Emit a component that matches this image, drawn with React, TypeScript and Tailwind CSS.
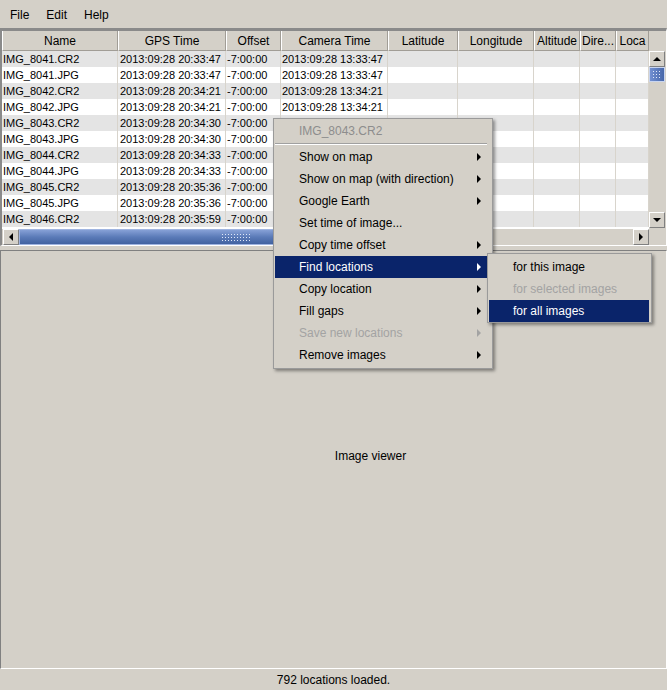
import React from 'react';

// camera time is covered by the context menu from the fifth row on
const rows = [
  ['IMG_8041.CR2', '20:33:47', '13:33:47'],
  ['IMG_8041.JPG', '20:33:47', '13:33:47'],
  ['IMG_8042.CR2', '20:34:21', '13:34:21'],
  ['IMG_8042.JPG', '20:34:21', '13:34:21'],
  ['IMG_8043.CR2', '20:34:30', ''],
  ['IMG_8043.JPG', '20:34:30', ''],
  ['IMG_8044.CR2', '20:34:33', ''],
  ['IMG_8044.JPG', '20:34:33', ''],
  ['IMG_8045.CR2', '20:35:36', ''],
  ['IMG_8045.JPG', '20:35:36', ''],
  ['IMG_8046.CR2', '20:35:59', ''],
];

const headers = ['Name', 'GPS Time', 'Offset', 'Camera Time', 'Latitude', 'Longitude', 'Altitude', 'Dire...', 'Loca'];

const cols = 'grid grid-cols-[116px_108px_55px_107px_70px_76px_46px_36px_33px]';

const menuItems = [
  { label: 'Show on map', sub: true },
  { label: 'Show on map (with direction)', sub: true },
  { label: 'Google Earth', sub: true },
  { label: 'Set time of image...', sub: false },
  { label: 'Copy time offset', sub: true },
  { label: 'Find locations', sub: true, active: true },
  { label: 'Copy location', sub: true },
  { label: 'Fill gaps', sub: true },
  { label: 'Save new locations', sub: true, disabled: true },
  { label: 'Remove images', sub: true },
];

function Btn({ children }: { children: React.ReactNode }) {
  return (
    <div className="w-[16px] h-[16px] shrink-0 bg-[#d4d0c8] border-t border-l border-white border-r border-b border-r-[#808080] border-b-[#808080] flex items-center justify-center">
      {children}
    </div>
  );
}

const grip = 'bg-[radial-gradient(circle,#dfe7f8_0.7px,transparent_1px)] bg-[length:3px_3px]';

export default function App() {
  return (
    <div className="w-[667px] h-[690px] bg-[#d4d0c8] flex flex-col relative overflow-hidden text-black font-['Liberation_Sans',Arial,sans-serif]">
      {/* Menu bar */}
      <div className="h-[28px] shrink-0 flex items-center pl-[10px] pt-[2px] gap-[17px] text-[12px]">
        <span>File</span>
        <span>Edit</span>
        <span>Help</span>
      </div>

      {/* Table */}
      <div className="h-[218px] shrink-0 border-t-[3px] border-l-2 border-[#8a8a8a] border-r border-b border-r-white border-b-white flex flex-col">
        <div className="h-[198px] flex">
          <div className="w-[647px] flex flex-col overflow-hidden">
            <div className={`${cols} h-[20px] shrink-0 text-[12px]`}>
              {headers.map((h) => (
                <div
                  key={h}
                  className="bg-[#d4d0c8] border-r border-b border-[#a19d96] border-l border-l-white flex items-center justify-center whitespace-nowrap overflow-hidden"
                >
                  {h}
                </div>
              ))}
            </div>
            {rows.map((r, i) => (
              <div key={i} className={`${cols} h-[16px] shrink-0 text-[11px] ${i % 2 === 0 ? 'bg-[#e4e4e4]' : 'bg-white'}`}>
                <div className="pl-[1px] border-r border-[#d8d4cc] leading-[16px] whitespace-nowrap">{r[0]}</div>
                <div className="pl-[2px] border-r border-[#d8d4cc] leading-[16px] whitespace-nowrap">2013:09:28 {r[1]}</div>
                <div className="pl-[1px] border-r border-[#d8d4cc] leading-[16px] whitespace-nowrap">-7:00:00</div>
                <div className="pl-[1px] border-r border-[#d8d4cc] leading-[16px] whitespace-nowrap">
                  {r[2] && `2013:09:28 ${r[2]}`}
                </div>
                <div className="border-r border-[#d8d4cc]" />
                <div className="border-r border-[#d8d4cc]" />
                <div className="border-r border-[#d8d4cc]" />
                <div className="border-r border-[#d8d4cc]" />
                <div className="border-r border-[#d8d4cc]" />
              </div>
            ))}
            <div className="flex-1 bg-white" />
          </div>
          {/* Vertical scrollbar */}
          <div className="w-[17px] flex flex-col">
            <div className="h-[20px] shrink-0" />
            <Btn>
              <div className="w-0 h-0 border-l-[4px] border-r-[4px] border-b-[4px] border-transparent border-b-black" />
            </Btn>
            <div className="h-[15px] shrink-0 w-[16px] border border-[#c9d5ef] bg-linear-to-r from-[#7290d2] to-[#4868aa] flex items-center justify-center">
              <div className={`w-[10px] h-[9px] ${grip}`} />
            </div>
            <div className="flex-1" />
            <Btn>
              <div className="w-0 h-0 border-l-[4px] border-r-[4px] border-t-[4px] border-transparent border-t-black" />
            </Btn>
            <div className="h-[1px]" />
          </div>
        </div>
        {/* Horizontal scrollbar */}
        <div className="h-[16px] flex pl-[1px]">
          <Btn>
            <div className="w-0 h-0 border-t-[4px] border-b-[4px] border-r-[4px] border-transparent border-r-black" />
          </Btn>
          <div className="w-[434px] h-[16px] border border-[#9fb4e0] bg-linear-to-b from-[#86a0d6] via-[#5b7bb8] to-[#4262a0] flex items-center justify-center">
            <div className={`w-[30px] h-[8px] ${grip}`} />
          </div>
          <div className="flex-1" />
          <Btn>
            <div className="w-0 h-0 border-t-[4px] border-b-[4px] border-l-[4px] border-transparent border-l-black" />
          </Btn>
          <div className="w-[17px]" />
        </div>
      </div>

      <div className="h-[4px] shrink-0" />

      {/* Image viewer */}
      <div className="flex-1 border-t border-l border-[#808080] border-r border-b border-r-white border-b-white flex items-center justify-center pl-[74px] pb-[8px] text-[12px]">
        Image viewer
      </div>

      {/* Status bar */}
      <div className="h-[21px] shrink-0 flex items-center justify-center text-[12px]">792 locations loaded.</div>

      {/* Context menu */}
      <div className="absolute left-[273px] top-[118px] w-[220px] h-[251px] bg-[#d4d0c8] border border-[#9a9a9a] pt-[1px] pl-[1px] pr-[5px] shadow-[2px_2px_3px_rgba(0,0,0,0.4)] text-[12px]">
        <div className="h-[22px] flex items-center pl-[24px] text-[#8d8d8d]">IMG_8043.CR2</div>
        <div className="h-[4px] flex flex-col justify-center">
          <div className="h-[2px] border-t border-[#a0a0a0] border-b border-b-white" />
        </div>
        {menuItems.map((m) => (
          <div
            key={m.label}
            className={`h-[22px] flex items-center justify-between pl-[24px] pr-[6px] ${
              m.active ? 'bg-[#0a246a] text-white' : m.disabled ? 'text-[#a3a3a3]' : 'text-black'
            }`}
          >
            <span>{m.label}</span>
            {m.sub && (
              <div
                className={`w-0 h-0 border-t-[4px] border-b-[4px] border-l-[4px] border-transparent ${
                  m.active ? 'border-l-white' : m.disabled ? 'border-l-[#a3a3a3]' : 'border-l-black'
                }`}
              />
            )}
          </div>
        ))}
      </div>

      {/* Submenu */}
      <div className="absolute left-[487px] top-[253px] w-[165px] h-[70px] bg-[#d4d0c8] border border-[#9a9a9a] pt-[2px] pl-[1px] pr-[2px] shadow-[2px_2px_3px_rgba(0,0,0,0.4)] text-[12px]">
        <div className="h-[22px] flex items-center pl-[24px]">for this image</div>
        <div className="h-[22px] flex items-center pl-[24px] text-[#a3a3a3]">for selected images</div>
        <div className="h-[22px] flex items-center pl-[24px] bg-[#0a246a] text-white">for all images</div>
      </div>
    </div>
  );
}
